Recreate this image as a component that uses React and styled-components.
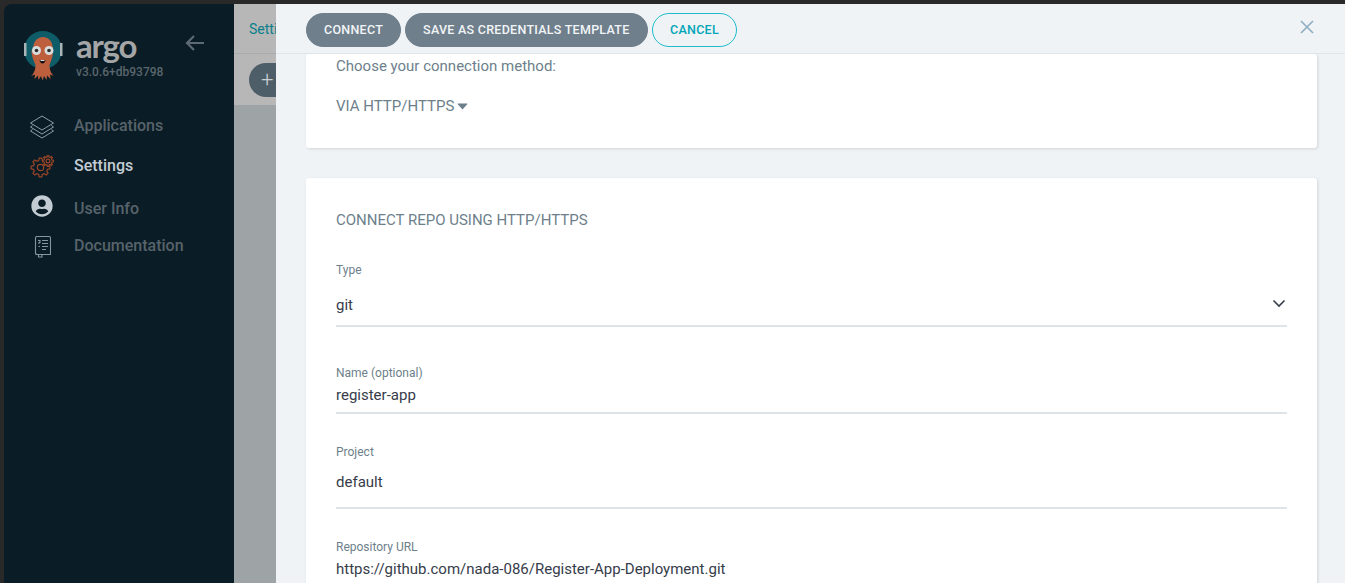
import React from 'react'
import styled, { createGlobalStyle } from 'styled-components'
import { FaUserCircle } from 'react-icons/fa'

const GlobalStyle = createGlobalStyle`
  html, body {
    margin: 0;
    height: 100%;
    overflow: hidden;
    background: #292929;
    font-family: Roboto, "Liberation Sans", sans-serif;
  }
  * { box-sizing: border-box; }
`

const Frame = styled.div`
  display: flex;
  height: 583px;
  padding: 4px 0 0 4px;
  overflow: hidden;
`
const Sidebar = styled.aside`
  width: 230px;
  flex: none;
  background: #0a1c25;
  border-top-left-radius: 8px;
`
const LogoRow = styled.div`
  display: flex;
  align-items: flex-start;
  height: 101px;
  padding: 24px 29px 0 18px;
`
const Brand = styled.div`
  margin-left: 10px;
`
const Wordmark = styled.div`
  font-family: Lato, sans-serif;
  font-size: 33px;
  font-weight: 700;
  line-height: 36px;
  color: #a3a5a6;
  letter-spacing: -1.2px;
  margin-top: -1px;
`
const Version = styled.div`
  font-size: 12px;
  font-weight: 500;
  line-height: 14px;
  margin-top: 2px;
  color: #5a666d;
`
const BackIcon = styled.svg`
  margin-left: auto;
  margin-top: 6px;
  color: #5e6a73;
`
const NavRow = styled.div`
  display: flex;
  align-items: center;
  gap: 10px;
  height: ${p => p.$h}px;
  padding-left: 16px;
  font-size: 16px;
  font-weight: 500;
  color: ${p => (p.$active ? '#c3ccd3' : '#57636b')};
`
const NavIcon = styled.span`
  width: 44px;
  display: flex;
  justify-content: center;
  align-items: center;
  margin-top: ${p => p.$shift || 0}px;
`
const Main = styled.main`
  position: relative;
  flex: 1;
  background: #9ea3a5;
  overflow: hidden;
`
const TopBar = styled.div`
  height: 50px;
  padding: 17px 15px 0;
  background: #b7b7b7;
  border-bottom: 1px solid #a9acae;
  font-size: 14px;
  color: #067f8c;
`
const Toolbar = styled.div`
  height: 51px;
  padding: 9px 15px;
  background: #b7b7b7;
`
const AddButton = styled.div`
  width: 120px;
  height: 34px;
  padding-left: 12px;
  border-radius: 17px;
  background: #4e5e69;
  color: #c9ced1;
  font-size: 22px;
  font-weight: 300;
  line-height: 33px;
`
const Panel = styled.section`
  position: absolute;
  top: 0;
  right: 0;
  bottom: 0;
  left: 42px;
  background: #eff3f6;
  display: flex;
  flex-direction: column;
`
const PanelHeader = styled.header`
  display: flex;
  align-items: flex-start;
  gap: 4px;
  flex: none;
  height: 50px;
  padding: 9px 30px 0;
  background: #eff3f6;
  border-bottom: 1px solid #dee6eb;
`
const Button = styled.div`
  height: 34px;
  padding: 0 ${p => (p.$outline ? '17.5px' : '17px')} 2px;
  border-radius: 17px;
  display: flex;
  align-items: center;
  font-size: 12.5px;
  font-weight: 500;
  letter-spacing: 0.27px;
  color: ${p => (p.$outline ? '#00a5b8' : '#f2f5f7')};
  background: ${p => (p.$outline ? 'transparent' : '#6f7f8c')};
  border: 1px solid ${p => (p.$outline ? '#1dbccd' : '#6f7f8c')};
`
const CloseIcon = styled.svg`
  margin-left: auto;
  margin-top: 6px;
  color: #8eadc0;
`
const PanelBody = styled.div`
  flex: 1;
  overflow: hidden;
  padding: 0 28px 0 30px;
`
const Card = styled.div`
  background: #fff;
  border-radius: 3px;
  box-shadow: 1px 1px 3px rgba(0, 0, 0, 0.12);
  padding: 0 30px;
`
const MethodCard = styled(Card)`
  height: 94px;
  margin-bottom: 30px;
  padding-top: 3px;
`
const Muted = styled.div`
  font-size: 15px;
  line-height: 18px;
  color: #6d7f8b;
`
const MethodPicker = styled(Muted)`
  display: flex;
  align-items: center;
  gap: 3px;
  margin-top: 22px;
`
const Caret = styled.svg`
  color: #6d7f8b;
  margin-top: 1px;
`
const SectionTitle = styled.h3`
  margin: 0;
  padding-top: 33px;
  font-size: 15px;
  font-weight: 400;
  line-height: 18px;
  color: #6d7f8b;
`
const Field = styled.div`
  position: relative;
  height: ${p => p.$h}px;
  padding-top: ${p => p.$top}px;
  border-bottom: ${p => (p.$plain ? 'none' : '2px solid #dee3e7')};
`
const Label = styled.label`
  display: block;
  font-size: 12px;
  line-height: 14px;
  color: #6d7f8b;
`
const Value = styled.div`
  font-size: 15px;
  line-height: 18px;
  margin-top: ${p => p.$top}px;
  color: #363c4a;
`
const Chevron = styled.svg`
  position: absolute;
  right: 1px;
  top: 70px;
  color: #363c4a;
`

const gearPath = (cx, cy, outer, inner, teeth) => {
  const pts = []
  const step = (Math.PI * 2) / teeth
  for (let i = 0; i < teeth; i++) {
    const a = i * step - Math.PI / 2
    ;[[-0.32, inner], [-0.17, outer], [0.17, outer], [0.32, inner]].forEach(([o, r]) => {
      const t = a + o * step
      pts.push(`${(cx + r * Math.cos(t)).toFixed(2)} ${(cy + r * Math.sin(t)).toFixed(2)}`)
    })
  }
  return `M${pts.join('L')}Z`
}

const OrgLogo = () => (
  <svg width="44" height="56" viewBox="22 28 44 56" style={{ flex: 'none' }}>
    <circle cx="43" cy="50" r="19" fill="#0f5c69" />
    <rect x="24" y="43" width="2.5" height="13" fill="#a9b4b6" />
    <rect x="60" y="43" width="2.5" height="13" fill="#a9b4b6" />
    <path
      d="M33 50c0-8 4-13 10-13s10 5 10 13c0 7-2 11-3.500 15 0 5 2 9 4.500 11l-4-1.500 .5 4.500-3.500-3.500-.5 4.500-2.500-4-1.500 4.500-1.500-4.500-2.500 4-.5-4.500-3.500 3.500 .5-4.500-4 1.500c2.500-2 4.500-6 4.500-11-1.500-4-4-8-4-15z"
      fill="#bd5f3d"
    />
    <circle cx="36.500" cy="50.500" r="4.500" fill="#d9dcdc" />
    <circle cx="49" cy="50.500" r="4.500" fill="#d9dcdc" />
    <circle cx="36.500" cy="50.500" r="1.800" fill="#2b2b2b" />
    <circle cx="49" cy="50.500" r="1.800" fill="#2b2b2b" />
    <path d="M39.500 60h6c-.5 2.500-1.500 3.500-3 3.500s-2.500-1-3-3.500z" fill="#1a1212" />
    <path d="M40.500 60h4v1h-4z" fill="#d9dcdc" />
  </svg>
)

const LayersIcon = () => (
  <svg width="24" height="24" viewBox="0 0 24 24" fill="none" stroke="#8f9ea8" strokeWidth="1">
    <path d="M12 1 L23.500 8 L12 15 L0.500 8Z" />
    <path d="M2.500 10.500 L0.500 12 L12 19 L23.500 12 L21.500 10.500" />
    <path d="M2.500 14.500 L0.500 16 L12 23 L23.500 16 L21.500 14.500" />
  </svg>
)

const GearsIcon = () => (
  <svg width="24" height="24" viewBox="0 0 24 24" fill="none" stroke="#9c4527" strokeWidth="1.200">
    <path d={gearPath(10.5, 13.5, 9.5, 7.2, 8)} />
    <circle cx="10.500" cy="13.500" r="3.200" />
    <path d={gearPath(18, 7, 5.5, 4.1, 8)} fill="#0a1c25" />
    <circle cx="18" cy="7" r="1.900" />
  </svg>
)

const BookIcon = () => (
  <svg width="18" height="22" viewBox="-2 0 18 22" fill="none" stroke="#8496a3" strokeWidth="1.100">
    <path d="M2 .5h12a1.500 1.500 0 0 1 1.500 1.500v16.500H2A1.500 1.500 0 0 1 .5 17V2A1.500 1.500 0 0 1 2 .5z" />
    <path d="M.5 17A1.500 1.500 0 0 0 2 18.500h1.500v2.500h3.500v-2.500" />
    <path d="M7 4.500h6M7 7.500h6M7 10.500h6M7 13.500h4M3 4.500h2v2H4v1.500M3.500 10.500h1.500" />
  </svg>
)

const navItems = [
  { label: 'Applications', h: 40, shift: 4, icon: <LayersIcon /> },
  { label: 'Settings', h: 41, icon: <GearsIcon />, active: true },
  { label: 'User Info', h: 44, shift: -4, icon: <FaUserCircle size={22} color="#c3ccd3" /> },
  { label: 'Documentation', h: 30, shift: 3, icon: <BookIcon /> },
]

const fields = [
  { label: 'Name (optional)', value: 'register-app', h: 87, top: 39, gap: 6 },
  { label: 'Project', value: 'default', h: 95, top: 31, gap: 14 },
  { label: 'Repository URL', value: 'https://github.com/nada-086/Register-App-Deployment.git', h: 90, top: 31, gap: 6, plain: true },
]

export default function App() {
  return (
    <>
      <GlobalStyle />
      <Frame>
        <Sidebar>
          <LogoRow>
            <OrgLogo />
            <Brand>
              <Wordmark>argo</Wordmark>
              <Version>v3.0.6+db93798</Version>
            </Brand>
            <BackIcon width="20" height="18" viewBox="0 0 20 18" fill="none" stroke="currentColor" strokeWidth="2.200">
              <path d="M19 9H2M9 2 2 9l7 7" />
            </BackIcon>
          </LogoRow>
          {navItems.map(item => (
            <NavRow key={item.label} $h={item.h} $active={item.active}>
              <NavIcon $shift={item.shift}>{item.icon}</NavIcon>
              {item.label}
            </NavRow>
          ))}
        </Sidebar>
        <Main>
          <TopBar>Settings</TopBar>
          <Toolbar>
            <AddButton>+</AddButton>
          </Toolbar>
          <Panel>
            <PanelHeader>
              <Button>CONNECT</Button>
              <Button>SAVE AS CREDENTIALS TEMPLATE</Button>
              <Button $outline>CANCEL</Button>
              <CloseIcon width="16" height="16" viewBox="0 0 16 16" fill="none" stroke="currentColor" strokeWidth="1.600">
                <path d="M2 2l12 12M14 2 2 14" />
              </CloseIcon>
            </PanelHeader>
            <PanelBody>
              <MethodCard>
                <Muted>Choose your connection method:</Muted>
                <MethodPicker>
                  VIA HTTP/HTTPS
                  <Caret width="11" height="7" viewBox="0 0 11 7" fill="currentColor">
                    <path d="M.5 1 Q.5 .5 1 .5H10Q10.500 .5 10.500 1L5.500 6.500Z" />
                  </Caret>
                </MethodPicker>
              </MethodCard>
              <Card>
                <SectionTitle>CONNECT REPO USING HTTP/HTTPS</SectionTitle>
                <Field $h={98} $top={34}>
                  <Label>Type</Label>
                  <Value $top={19}>git</Value>
                  <Chevron width="14" height="9" viewBox="0 0 14 9" fill="none" stroke="currentColor" strokeWidth="1.600">
                    <path d="M1.500 1.500 7 7l5.500-5.500" />
                  </Chevron>
                </Field>
                {fields.map(f => (
                  <Field key={f.label} $h={f.h} $top={f.top} $plain={f.plain}>
                    <Label>{f.label}</Label>
                    <Value $top={f.gap}>{f.value}</Value>
                  </Field>
                ))}
              </Card>
            </PanelBody>
          </Panel>
        </Main>
      </Frame>
    </>
  )
}
